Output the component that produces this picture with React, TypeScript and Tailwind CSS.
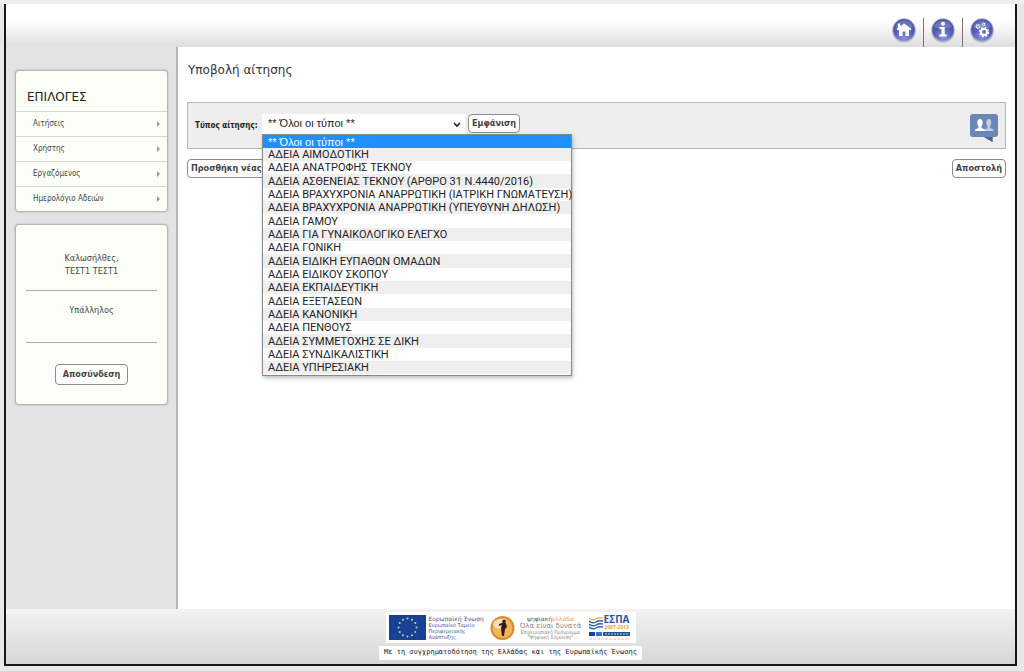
import React from 'react';
import { clsx } from 'clsx';

const menuItems = ['Αιτήσεις', 'Χρήστης', 'Εργαζόμενος', 'Ημερολόγιο Αδειών'];

const leaveTypes = [
	'** Όλοι οι τύποι **',
	'ΑΔΕΙΑ ΑΙΜΟΔΟΤΙΚΗ',
	'ΑΔΕΙΑ ΑΝΑΤΡΟΦΗΣ ΤΕΚΝΟΥ',
	'ΑΔΕΙΑ ΑΣΘΕΝΕΙΑΣ ΤΕΚΝΟΥ (ΑΡΘΡΟ 31 Ν.4440/2016)',
	'ΑΔΕΙΑ ΒΡΑΧΥΧΡΟΝΙΑ ΑΝΑΡΡΩΤΙΚΗ (ΙΑΤΡΙΚΗ ΓΝΩΜΑΤΕΥΣΗ)',
	'ΑΔΕΙΑ ΒΡΑΧΥΧΡΟΝΙΑ ΑΝΑΡΡΩΤΙΚΗ (ΥΠΕΥΘΥΝΗ ΔΗΛΩΣΗ)',
	'ΑΔΕΙΑ ΓΑΜΟΥ',
	'ΑΔΕΙΑ ΓΙΑ ΓΥΝΑΙΚΟΛΟΓΙΚΟ ΕΛΕΓΧΟ',
	'ΑΔΕΙΑ ΓΟΝΙΚΗ',
	'ΑΔΕΙΑ ΕΙΔΙΚΗ ΕΥΠΑΘΩΝ ΟΜΑΔΩΝ',
	'ΑΔΕΙΑ ΕΙΔΙΚΟΥ ΣΚΟΠΟΥ',
	'ΑΔΕΙΑ ΕΚΠΑΙΔΕΥΤΙΚΗ',
	'ΑΔΕΙΑ ΕΞΕΤΑΣΕΩΝ',
	'ΑΔΕΙΑ ΚΑΝΟΝΙΚΗ',
	'ΑΔΕΙΑ ΠΕΝΘΟΥΣ',
	'ΑΔΕΙΑ ΣΥΜΜΕΤΟΧΗΣ ΣΕ ΔΙΚΗ',
	'ΑΔΕΙΑ ΣΥΝΔΙΚΑΛΙΣΤΙΚΗ',
	'ΑΔΕΙΑ ΥΠΗΡΕΣΙΑΚΗ',
];

//μπλε στρογγυλό κουμπί της κεφαλίδας
const Orb: React.FC<{ label: string; children: React.ReactNode }> = ({ label, children }) => (
	<button type="button" aria-label={label} className="cursor-pointer">
		<svg width="24" height="25" viewBox="0 0 24 25">
			<defs>
				<radialGradient id="orb" cx="0.5" cy="0.85" r="0.85">
					<stop offset="0" stopColor="#8995df" />
					<stop offset="0.5" stopColor="#5562bb" />
					<stop offset="1" stopColor="#3f4795" />
				</radialGradient>
			</defs>
			<ellipse cx="12" cy="14" rx="11.5" ry="10.5" fill="#8f90a8" opacity="0.5" />
			<circle cx="12" cy="12" r="11.7" fill="#a9abc6" />
			<circle cx="12" cy="12" r="10.7" fill="url(#orb)" />
			<path d="M3 9a9.4 9.4 0 0 1 18 0Q12 12 3 9Z" fill="#fff" opacity="0.2" />
			{children}
		</svg>
	</button>
);

const Button: React.FC<{ className?: string; children: React.ReactNode }> = ({ className, children }) => (
	<button
		type="button"
		className={clsx(
			"shrink-0 whitespace-nowrap rounded border border-[#8c8c8c] bg-white font-['DejaVu_Sans_Condensed','DejaVu_Sans',sans-serif] text-[9px] font-bold text-[#444] cursor-pointer",
			className
		)}>
		{children}
	</button>
);

const Header: React.FC = () => (
	<header className="flex h-[43px] items-end justify-end bg-linear-to-b from-white from-40% to-[#dedede] pr-[21px]">
		<div className="flex h-[29px] items-center">
			<div className="flex h-full items-start border-r border-[#777] pr-[7px]">
				<Orb label="Αρχική">
					<path
						d="M12 5.5 10.5 6.8 9 8 8 7V5.5H6v3.7L4.5 11l1.200 1.5 1.300-1V18h3.5v-4.5h3V18H17v-6.5l1.300 1 1.200-1.5Z"
						fill="#fff"
					/>
				</Orb>
			</div>
			<div className="flex h-full items-start border-r border-[#777] px-[7px]">
				<Orb label="Πληροφορίες">
					<circle cx="12" cy="5.8" r="2" fill="#fff" />
					<path d="M8.5 9h5.2v7.5h2V18.5H8.3v-2h2.1V11H8.5Z" fill="#fff" />
				</Orb>
			</div>
			<div className="flex h-full items-start pl-[7px]">
				<Orb label="Ρυθμίσεις">
					<circle cx="14" cy="14" r="3" fill="none" stroke="#fff" strokeWidth="2" />
					<circle cx="14" cy="14" r="4.4" fill="none" stroke="#fff" strokeWidth="1.6" strokeDasharray="1.8 1.66" />
					<circle cx="8" cy="8.5" r="1.7" fill="none" stroke="#fff" strokeWidth="1.5" strokeDasharray="1.3 0.5" />
					<circle cx="13.5" cy="6.5" r="1.3" fill="none" stroke="#fff" strokeWidth="1.3" strokeDasharray="1.1 0.4" />
				</Orb>
			</div>
		</div>
	</header>
);

const Sidebar: React.FC = () => (
	<aside className="flex w-[172px] shrink-0 flex-col gap-3 border-r-2 border-[#b5b5b5] bg-[#e3e3e3] pt-[23px] pr-2 pl-[9px] font-['DejaVu_Sans_Condensed','DejaVu_Sans',sans-serif] text-[#444]">
		<nav className="rounded border border-[#b5b5b5] bg-[#fcfff7] shadow-[0_0_2px_#aaa]">
			<h2 className="flex h-10 items-end px-[11px] pb-[5px] font-['DejaVu_Sans',sans-serif] text-xs leading-[18px] text-[#222]">
				ΕΠΙΛΟΓΕΣ
			</h2>
			<ul>
				{menuItems.map((item) => (
					<li key={item} className="border-t border-[#d5d5d5]">
						<a href="#" className="flex h-6 items-center justify-between pr-[7px] pl-[17px] text-[8px]">
							{item}
							<svg width="3" height="6" viewBox="0 0 3 6">
								<path d="M0 0 3 3 0 6Z" fill="#999" />
							</svg>
						</a>
					</li>
				))}
			</ul>
		</nav>
		<section className="flex flex-col rounded border border-[#b5b5b5] bg-[#fcfff7] px-[10px] pt-[27px] pb-[19px] text-center text-[9px] leading-[13px] shadow-[0_0_2px_#aaa]">
			<p className="border-b border-[#aaa] pb-3">
				Καλωσήλθες,
				<br />
				ΤΕΣΤ1 ΤΕΣΤ1
			</p>
			<p className="border-b border-[#aaa] pt-[13px] pb-[25px]">Υπάλληλος</p>
			<Button className="mt-[21px] h-[21px] self-center px-[7px]">Αποσύνδεση</Button>
		</section>
	</aside>
);

const LeaveTypeSelect: React.FC = () => {
	const [selected, setSelected] = React.useState(leaveTypes[0]);

	return (
		<div className="relative text-[11px] text-[#222]">
			<select
				id="leave-type"
				value={selected}
				onChange={(e) => setSelected(e.target.value)}
				className="block h-5 w-[203px] appearance-none bg-white pl-[6px] font-['Liberation_Sans',sans-serif]">
				{leaveTypes.map((type) => (
					<option key={type}>{type}</option>
				))}
			</select>
			<svg className="pointer-events-none absolute top-2 right-1" width="8" height="6" viewBox="0 0 8 6">
				<path d="m1 1 3 3 3-3" fill="none" stroke="#222" strokeWidth="1.6" />
			</svg>
			<ul
				role="listbox"
				aria-label="Τύπος αίτησης"
				className="absolute top-5 left-0 z-10 flex h-[242px] w-[310px] flex-col border border-[#888] bg-white font-['Roboto','Liberation_Sans',sans-serif] shadow-[1px_2px_4px_#0004]">
				{leaveTypes.map((type) => (
					<li
						key={type}
						role="option"
						aria-selected={type === selected}
						onClick={() => setSelected(type)}
						className={clsx(
							'flex flex-1 items-center whitespace-nowrap pt-px pl-[5px] leading-3',
							type === selected
								? "bg-[#1e90ff] font-['Liberation_Sans',sans-serif] text-white"
								: 'even:bg-[#efefef]'
						)}>
						{type}
					</li>
				))}
			</ul>
		</div>
	);
};

const Main: React.FC = () => (
	<main className="min-w-0 flex-1 bg-white pt-[14px] pr-[9px] pl-[9px]">
		<h1 className="pl-px text-xs leading-[18px] text-[#333]">Υποβολή αίτησης</h1>
		<div className="mt-[23px] flex h-[47px] items-center border border-[#b5b5b5] bg-[#eee] px-[7px]">
			<label
				htmlFor="leave-type"
				className="w-[67px] shrink-0 whitespace-nowrap font-['DejaVu_Sans_Condensed','DejaVu_Sans',sans-serif] text-[8px] font-bold text-[#222]">
				Τύπος αίτησης:
			</label>
			<div className="flex items-center gap-[3px] pb-1">
				<LeaveTypeSelect />
				<Button className="h-[19px] px-[3px]">Εμφάνιση</Button>
			</div>
			<button type="button" aria-label="Χρήστες" className="mt-1 ml-auto cursor-pointer">
				<svg width="28" height="28" viewBox="0 0 28 28">
					<path d="M3 0h22a3 3 0 0 1 3 3v17a3 3 0 0 1-3 3h-2.5v5L14 23H3a3 3 0 0 1-3-3V3a3 3 0 0 1 3-3Z" fill="#6b86b8" />
					<path d="M14 23h8.5v5Z" fill="#4c6298" />
					<path d="M14.5 17v-1.5l3-1.5v-2c-1.800-2-1.800-7 1.300-7s3 5 1.200 7v2l3.500 1.5V17Z" fill="#c3cde2" />
					<path d="M5 17v-1.5L8.5 14v-2C6.7 10 6.7 5 10 5s3.300 5 1.500 7v2l3.500 1.5V17Z" fill="#fff" />
				</svg>
			</button>
		</div>
		<div className="mt-[10px] flex justify-between">
			<Button className="h-[19px] px-[3px]">Προσθήκη νέας</Button>
			<Button className="h-[19px] px-[3px]">Αποστολή</Button>
		</div>
	</main>
);

//τα 12 αστέρια της σημαίας
const stars = [...Array(12)].map((_, i) => {
	const angle = (i * Math.PI) / 6;
	return { x: 18.5 + 9 * Math.sin(angle), y: 12.5 - 9 * Math.cos(angle) };
});

const Footer: React.FC = () => (
	<footer className="flex h-[55px] flex-col items-center bg-linear-to-b from-[#f2f2f2] to-[#d6d8d7] pt-[3px]">
		<div className="flex h-[31px] w-[250px] items-center bg-white pr-[6px] pl-[3px]">
			<svg width="37" height="25" viewBox="0 0 37 25" className="shrink-0">
				<rect width="37" height="25" fill="#164194" />
				{stars.map((star, i) => (
					<circle key={i} cx={star.x} cy={star.y} r="1" fill="#d8d67a" />
				))}
			</svg>
			<div className="w-[64px] shrink-0 whitespace-nowrap pl-[3px] text-[5px] leading-[6px] text-[#3a5a98]">
				<p className="text-[6px] leading-[7px]">Ευρωπαϊκή Ένωση</p>
				<p>Ευρωπαϊκό Ταμείο</p>
				<p>Περιφερειακής</p>
				<p>Ανάπτυξης</p>
			</div>
			<svg width="25" height="26" viewBox="0 0 25 26" className="shrink-0">
				<circle cx="12.5" cy="13" r="12" fill="#d88b2b" />
				<circle cx="12.5" cy="13" r="10" fill="#f5b557" />
				<ellipse cx="10" cy="9" rx="7" ry="5" fill="#fff" opacity="0.55" />
				<circle cx="14" cy="6.5" r="1.8" fill="#2b1b12" />
				<path d="m9 9 3-1h4l1 4-2 2-1 7h-2l-1-8 1-3-3 1Z" fill="#2b1b12" />
			</svg>
			<div className="w-[69px] shrink-0 whitespace-nowrap pl-[3px] text-center font-['DejaVu_Sans_Condensed','DejaVu_Sans',sans-serif] text-[5px] leading-[5px] text-[#888]">
				<p className="font-['DejaVu_Sans',sans-serif] text-[6px] leading-[7px] text-[#555]">
					ψηφιακή<span className="text-[#e5a076]">ελλάδα</span>
				</p>
				<p className="font-['DejaVu_Sans',sans-serif] text-[7px] leading-[8px]">Όλα είναι δυνατά</p>
				<p>Επιχειρησιακό Πρόγραμμα</p>
				<p>"Ψηφιακή Σύγκλιση"</p>
			</div>
			<div className="flex flex-1 flex-col items-end gap-[1px]">
				<div className="flex items-center gap-[1px]">
					<svg width="14" height="16" viewBox="0 0 14 16" className="shrink-0">
						<path d="M0 3q4 3 7 1t7-1" fill="none" stroke="#e5b84a" strokeWidth="1.5" />
						<path d="M0 6q4 3 7 1t7-1M0 9q4 3 7 1t7-1M0 12q4 3 7 1t7-1" fill="none" stroke="#2e61a8" strokeWidth="1.5" />
					</svg>
					<div className="text-center font-['Open_Sans',sans-serif] font-bold whitespace-nowrap">
						<p className="text-[10px] leading-[9px] text-[#24569e]">ΕΣΠΑ</p>
						<p className="text-[5px] leading-[7px] text-[#e0a72f]">2007-2013</p>
					</div>
				</div>
				<svg width="41" height="9" viewBox="0 0 41 9">
					<rect width="6" height="4" fill="#164194" />
					<rect x="7" width="6" height="4" fill="#3972b4" />
					<rect x="14" width="27" height="4" fill="#24569e" />
					<path d="M16 2h23" stroke="#b6c8e0" strokeDasharray="2 1" />
					<path d="M0 7h41" stroke="#e6c681" strokeDasharray="3 1" />
				</svg>
			</div>
		</div>
		<p className="mt-[3px] h-[14px] whitespace-nowrap bg-white px-[5px] font-['DejaVu_Sans_Mono',monospace] text-[7px] leading-[13px] text-[#222]">
			Με τη συγχρηματοδότηση της Ελλάδας και της Ευρωπαϊκής Ένωσης
		</p>
	</footer>
);

export default function App() {
	return (
		<div className="flex min-h-screen flex-col border-t-4 border-t-[#eee] bg-[#e8e8e8] pr-[7px] pb-[5px] pl-1 font-['DejaVu_Sans',sans-serif]">
			<div className="flex flex-1 flex-col border-2 border-t-0 border-[#181818]">
				<Header />
				<div className="flex flex-1">
					<Sidebar />
					<Main />
				</div>
				<Footer />
			</div>
		</div>
	);
}
